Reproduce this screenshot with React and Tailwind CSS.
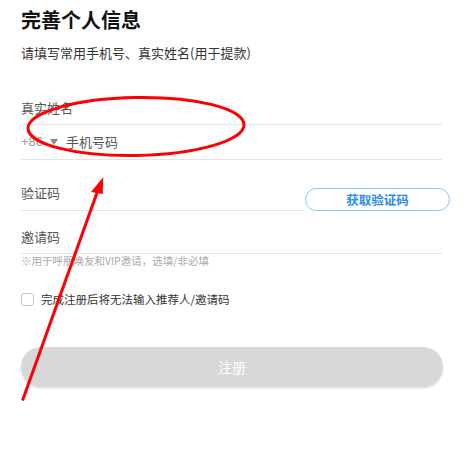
export default function App() {
  const cjk = { fontFamily: '"Noto Sans CJK SC", "Noto Sans", sans-serif' };
  return (
    <div className="relative w-[464px] h-[456px] bg-white overflow-hidden" style={cjk}>
      <div className="pl-[21px] pr-[22px] pt-[6px]">
        <h1 className="text-[20px] leading-[28px] font-bold text-[#111]">完善个人信息</h1>
        <p className="mt-[9px] text-[13px] leading-[20px] text-[#333]">请填写常用手机号、真实姓名(用于提款)</p>

        <div className="mt-[29px] h-[33px] flex items-center border-b border-[#e3e3ea] text-[13px] leading-[20px] text-[#555]">
          真实姓名
        </div>
        <div className="h-[35px] flex items-center border-b border-[#e3e3ea] text-[13px] leading-[20px]">
          <span className="text-[#999]" style={{ fontFamily: '"Liberation Sans", sans-serif' }}>+86</span>
          <span className="ml-[7px] w-0 h-0 border-l-[4px] border-r-[4px] border-t-[6px] border-l-transparent border-r-transparent border-t-[#888]"></span>
          <span className="ml-[8px] text-[#555]">手机号码</span>
        </div>

        <div className="flex items-end w-[429px]">
          <div className="w-[284px] h-[51px] pt-[23px] pb-[7px] border-b border-[#e3e3ea] text-[13px] leading-[20px] text-[#555]">
            验证码
          </div>
          <button className="w-[145px] h-[23px] rounded-full border-[1.5px] border-[#8ec5f3] bg-white text-[12.5px] leading-[18px] font-semibold text-[#2a8ce6] flex items-center justify-center">
            获取验证码
          </button>
        </div>

        <div className="h-[43px] pt-[16px] pb-[6px] border-b border-[#e3e3ea] text-[13px] leading-[20px] text-[#555]">
          邀请码
        </div>
        <p className="text-[10.5px] leading-[14px] text-[#aaa]">※用于呼朋唤友和VIP邀请，选填/非必填</p>

        <div className="mt-[21px] flex items-center h-[20px]">
          <span className="w-[13px] h-[13px] rounded-[3px] border border-[#c4c4cc] bg-white"></span>
          <span className="ml-[7px] text-[11.5px] leading-[20px] text-[#333]">完成注册后将无法输入推荐人/邀请码</span>
        </div>

        <button className="mt-[38px] w-[422px] h-[40px] rounded-full bg-[#d8d8d8] shadow-[0_1.5px_2px_rgba(0,0,0,0.12)] text-white text-[14px] flex items-center justify-center">
          注册
        </button>
      </div>

      <svg className="absolute inset-0 pointer-events-none" width="464" height="456" viewBox="0 0 464 456">
        <ellipse cx="136" cy="126.5" rx="108" ry="29" fill="none" stroke="#ff0000" strokeWidth="3" transform="rotate(-1 136 126.5)" />
        <line x1="22.5" y1="400.5" x2="98" y2="190" stroke="#ff0000" strokeWidth="3" />
        <polygon points="103.3,177 91,192 102.7,194" fill="#ff0000" />
      </svg>
    </div>
  );
}
